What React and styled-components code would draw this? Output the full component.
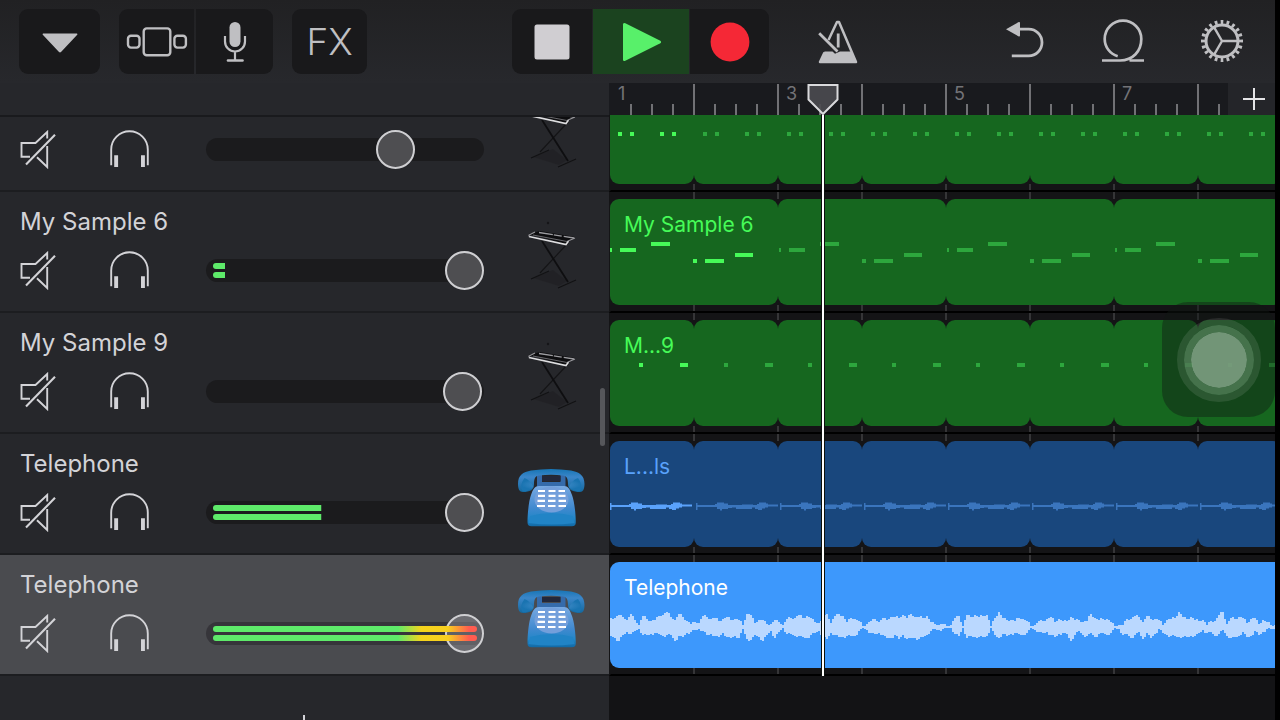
import React, { useState } from "react";
import styled, { createGlobalStyle, css } from "styled-components";

const GlobalStyle = createGlobalStyle`
  * {
    box-sizing: border-box;
  }
  body {
    margin: 0;
    background: #000;
    font-family: Inter, "Liberation Sans", sans-serif;
  }
  button {
    margin: 0;
    padding: 0;
    border: 0;
    background: none;
    color: inherit;
    font: inherit;
    cursor: pointer;
  }
  svg {
    display: block;
  }
`;

/* one bar of the song, in pixels */
const BAR = 84;

const Page = styled.div`
  position: relative;
  display: flex;
  flex-direction: column;
  height: 100vh;
  overflow: hidden;
  border-right: 5px solid #000;
  background: linear-gradient(#212123, #27282c 83px);
`;

/* ---------- toolbar ---------- */

const Toolbar = styled.header`
  flex: none;
  display: grid;
  grid-template-columns: 1fr auto 1fr;
  align-items: center;
  height: 83px;
  padding: 0 13px 0 19px;
  color: #bfbfc2;
`;

const ToolGroups = styled.div`
  display: flex;
  gap: 19px;
`;

const ButtonGroup = styled.div`
  display: flex;
  gap: ${({ gap }) => gap || "0"};
  border-radius: 9px;
  overflow: hidden;
`;

const ToolButton = styled.button`
  display: flex;
  justify-content: center;
  align-items: center;
  width: ${({ width }) => width};
  height: 65px;
  background: ${({ on }) => (on ? "#1b431f" : "#19191b")};
`;

const FxButton = styled(ToolButton)`
  font-size: 37px;
  font-weight: 300;
`;

const PlainButton = styled(ToolButton)`
  background: none;
`;

const RightTools = styled.div`
  display: flex;
  justify-content: space-between;
  padding-left: 28px;
`;

/* ---------- workspace ---------- */

const Workspace = styled.main`
  flex: 1;
  display: grid;
  grid-template-columns: 609px 1fr;
  min-height: 0;
`;

const TrackPanel = styled.section`
  position: relative;
  display: flex;
  flex-direction: column;
  min-height: 0;
  background: #26272b;
`;

const PanelHeader = styled.div`
  flex: none;
  height: 34px;
  border-bottom: 2px solid #191a1d;
`;

const Viewport = styled.div`
  flex: 1;
  min-height: 0;
  overflow: hidden;
`;

/* the list is scrolled a little way down */
const TrackList = styled.ul`
  margin: -46px 0 0;
  padding: 0;
  list-style: none;
`;

const TrackRow = styled.li`
  display: grid;
  grid-template-columns: 1fr 68px;
  gap: 33px;
  height: 121px;
  padding: 0 24px 0 20px;
  border-bottom: 2px solid #1c1d20;
  background: ${({ selected }) => (selected ? "#4a4b4f" : "#26272b")};
  color: #d3d3d7;
`;

const TrackMain = styled.div`
  display: flex;
  flex-direction: column;
  gap: 14px;
  padding-top: 15px;
`;

const TrackName = styled.div`
  height: 30px;
  font-size: 24px;
  line-height: 30px;
  white-space: nowrap;
`;

const Controls = styled.div`
  display: flex;
  justify-content: space-between;
`;

const IconButton = styled.button`
  width: ${({ width }) => width};
  height: 39px;
`;

const Instrument = styled.div`
  padding-top: 28px;
`;

const Volume = styled.label`
  display: grid;
  align-items: center;
  width: 278px;
  height: 39px;

  > * {
    grid-area: 1 / 1;
  }
`;

const Groove = styled.span`
  display: flex;
  flex-direction: column;
  justify-content: center;
  gap: 3px;
  height: 23px;
  padding: 0 7px;
  border-radius: 12px;
  background: ${({ selected }) => (selected ? "#36353a" : "#1b1b1d")};
`;

const MeterBar = styled.span`
  height: 6px;
  border-radius: 3px;
  background: linear-gradient(
    to right,
    #5eea6a 70%,
    #f5d31c 79%,
    #f8cf20 89%,
    #ff5c50 97%
  );
`;

const thumbColor = css`
  ${({ selected }) =>
    selected ? "rgba(150, 148, 156, 0.45)" : "rgba(80, 80, 83, 0.96)"}
`;

const Range = styled.input`
  appearance: none;
  width: 100%;
  height: 39px;
  margin: 0;
  background: none;

  &::-webkit-slider-thumb {
    appearance: none;
    width: 39px;
    height: 39px;
    border: 2px solid #cfcfd2;
    border-radius: 50%;
    background: ${thumbColor};
  }
`;

const AddTrack = styled.button`
  display: flex;
  justify-content: center;
  align-items: center;
  width: 100%;
  height: 119px;
  padding-right: 2px;
  color: #d3d3d7;
`;

const ScrollThumb = styled.div`
  position: absolute;
  top: 305px;
  right: 4px;
  width: 5px;
  height: 58px;
  border-radius: 3px;
  background: #56575b;
`;

/* ---------- timeline ---------- */

const Timeline = styled.section`
  min-width: 0;
  overflow: hidden;
  background: #131315;
`;

const Song = styled.div`
  position: relative;
`;

const RulerRow = styled.div`
  display: flex;
  height: 32px;
  background: #191a1e;
`;

const Ruler = styled.div`
  flex: 1;
  display: flex;
  min-width: 0;
  overflow: hidden;
`;

const RulerBar = styled.div`
  flex: none;
  width: ${BAR}px;
  height: 31px;
  margin-top: 1px;
  padding-left: 7px;
  border-left: 2px solid ${({ first }) => (first ? "transparent" : "#717175")};
  background: repeating-linear-gradient(
      to right,
      transparent 0 19px,
      #717175 19px 21px
    )
    bottom / 100% 11px no-repeat;
  color: #737377;
  font-size: 18px;
  line-height: 20px;
`;

const AddSection = styled.button`
  flex: none;
  display: flex;
  justify-content: center;
  align-items: center;
  width: 47px;
  padding-left: 5px;
  background: #242529;
  color: #e4e4e6;
`;

const LaneViewport = styled.div`
  overflow: hidden;
`;

const Lanes = styled.div`
  margin-top: -44px;
  background: #141416;
`;

const Lane = styled.div`
  height: 121px;
  padding: 7px 0 6px;
  border-left: 2px solid #141416;
  border-bottom: 2px solid #000;
  background: repeating-linear-gradient(
      to right,
      #353537 0 2px,
      transparent 2px ${BAR}px
    )
    border-box;
`;

const Region = styled.div`
  display: flex;
  height: 106px;
  margin-left: -1px;
  background: #141416;
`;

const regionColors = {
  midi: { fill: "#16671f", bright: "#46fb58", dim: "#2da73d" },
  dark: { fill: "#19477d", bright: "#5aa2fb", dim: "#3a75bd" },
  audio: { fill: "#3d98fc", bright: "#bad8ff", dim: "#bad8ff" },
};

const Loop = styled.div`
  flex: none;
  display: grid;
  width: ${({ bars }) => bars * BAR}px;
  height: 106px;
  border-radius: 9px;
  background: ${({ kind }) => regionColors[kind].fill};
  color: ${({ kind }) => regionColors[kind].bright};
  overflow: hidden;

  > * {
    grid-area: 1 / 1;
  }
`;

const RegionName = styled.span`
  padding: 13px 0 0 14px;
  color: ${({ kind }) => (kind === "audio" ? "#fff" : "inherit")};
  font-size: 21px;
  line-height: 26px;
  white-space: nowrap;
`;

const Playhead = styled.div`
  position: absolute;
  top: 0;
  bottom: 0;
  left: 198px;
  display: flex;
  flex-direction: column;
  align-items: center;
  width: 32px;
`;

const PlayheadLine = styled.div`
  flex: 1;
  width: 4px;
  border: solid #0b0f0c;
  border-width: 0 1px;
  background: #fff;
`;

const TouchButton = styled.button`
  position: absolute;
  top: 302px;
  right: 0;
  display: flex;
  justify-content: center;
  align-items: center;
  width: 113px;
  height: 115px;
  border-radius: 26px;
  background: rgba(16, 24, 18, 0.42);
`;

const TouchRing = styled.span`
  display: flex;
  justify-content: center;
  align-items: center;
  width: 84px;
  height: 84px;
  border: 7px solid rgba(255, 255, 255, 0.1);
  border-radius: 50%;
`;

const TouchDisc = styled.span`
  width: 70px;
  height: 70px;
  border: 7px solid rgba(96, 138, 102, 0.66);
  border-radius: 50%;
  background: rgba(128, 160, 132, 0.88);
  background-clip: padding-box;
`;

/* ---------- icons ---------- */

const TriangleIcon = () => (
  <svg width="36" height="22" viewBox="0 0 36 22">
    <path d="M1 2.500h34q1 .6 0 1.600L19 21q-1 .8-2 0L1 4.100q-1-1 0-1.600z" fill="currentColor" />
  </svg>
);

const BrowserIcon = () => (
  <svg width="62" height="32" viewBox="0 0 62 32" fill="none" stroke="currentColor" strokeWidth="2.4">
    <rect x="2" y="9.8" width="11.5" height="11.8" rx="3" />
    <rect x="17.7" y="2.4" width="26.6" height="26.9" rx="3" />
    <rect x="48.4" y="9.8" width="11.5" height="11.8" rx="3" />
  </svg>
);

const MicIcon = () => (
  <svg width="24" height="42" viewBox="0 0 24 42" fill="none" stroke="currentColor" strokeWidth="2.2">
    <rect x="6.5" y="1" width="11" height="25" rx="5.5" fill="currentColor" stroke="none" />
    <path d="M2 15v5.500a10 10 0 0 0 20 0V15M12 30.500v9" />
    <path d="M5 39.500h14.500" strokeWidth="2.6" strokeLinecap="round" />
  </svg>
);

const StopIcon = () => (
  <svg width="36" height="36" viewBox="0 0 36 36">
    <rect x=".5" y=".5" width="35" height="35" rx="2.5" fill="#d0ced2" />
  </svg>
);

const PlayIcon = () => (
  <svg width="40" height="40" viewBox="0 0 40 40">
    <path d="M2 2.500q0-2.300 2.300-1.300l35 17.500q1.600 1.300 0 2.600l-35 17.500Q2 39.800 2 37.500z" fill="#58f06a" />
  </svg>
);

const RecordIcon = () => (
  <svg width="40" height="40" viewBox="0 0 40 40">
    <circle cx="20" cy="20" r="19.4" fill="#f52836" />
  </svg>
);

const MetronomeIcon = () => (
  <svg width="42" height="46" viewBox="0 0 42 46" fill="none" stroke="currentColor" strokeWidth="2.5">
    <path d="M12.500 21 21 3h2l17 40H4l4.500-9.500" strokeLinejoin="round" />
    <path d="M8.500 32.500h8l2.500 2.200 5-2.200h12L40.500 44h-37z" fill="currentColor" stroke="none" />
    <path d="M22.200 14.500v14M3.200 14.200 21.500 32.500" strokeWidth="2.8" />
  </svg>
);

const UndoIcon = () => (
  <svg width="42" height="42" viewBox="0 0 42 42">
    <path d="M3 8.200 15.800 1q1.200-.4 1.200 1v12.500q0 1.300-1.200 1z" fill="currentColor" />
    <path d="M16 8.200h9.700a13.300 13.300 0 0 1 0 26.600H8.800" fill="none" stroke="currentColor" strokeWidth="2.8" />
  </svg>
);

const LoopIcon = () => (
  <svg width="46" height="46" viewBox="0 0 46 46" fill="none" stroke="currentColor" strokeWidth="2.7">
    <path d="M2 41.500h18C33 41.500 41.300 32 41.300 20A18.300 18.300 0 1 0 4.700 20c0 8 5.300 15 13 17.300M29.500 41.500H44" />
  </svg>
);

const GearIcon = () => (
  <svg width="44" height="44" viewBox="0 0 44 44" fill="none" stroke="currentColor">
    <circle cx="22" cy="21" r="16" strokeWidth="3" />
    <circle cx="22" cy="21" r="19" strokeWidth="4" pathLength="40" strokeDasharray=".9 1.1" strokeDashoffset=".45" />
    <path d="M22 21h16M22 21l-8-13.900M22 21l-8 13.900" strokeWidth="2.4" />
  </svg>
);

const MuteIcon = () => (
  <svg width="36" height="39" viewBox="0 0 36 39" fill="none" stroke="currentColor" strokeWidth="1.9">
    <path d="M27.200 8.500V2L15.500 13h-14v13.700H10M17 27.200l10.200 9.800V16" />
    <path d="M6 34.500 35 4.800" strokeWidth="2.1" />
  </svg>
);

const HeadphonesIcon = () => (
  <svg width="42" height="39" viewBox="0 0 42 39">
    <path d="M1.200 35.200V19.500a18.300 18.300 0 0 1 36.600 0v15.700" fill="none" stroke="currentColor" strokeWidth="1.9" />
    <path d="M4.200 25.300h3.900V37H4.200zM31 25.300h3.900V37H31z" fill="currentColor" />
  </svg>
);

const PlusIcon = ({ size }) => (
  <svg width={size} height={size} viewBox={`0 0 ${size} ${size}`} stroke="currentColor" strokeWidth="2">
    <path d={`M0 ${size / 2}H${size}M${size / 2} 0V${size}`} />
  </svg>
);

const PlayheadIcon = () => (
  <svg width="32" height="32" viewBox="0 0 32 32">
    <path d="M1.500 2h29v14.500L16 31 1.500 16.500z" fill="#4b4b50" fillOpacity=".9" stroke="#d9d9dc" strokeWidth="2" />
  </svg>
);

const KeyboardIcon = () => (
  <svg width="68" height="70" viewBox="0 0 68 70" fill="none">
    <path d="m16 58 20-8 14 11-8 5z" fill="#202124" fillOpacity=".8" />
    <path d="M51 23 23 53" stroke="#141416" strokeWidth="1.1" />
    <path d="m25 21 26 41" stroke="#0e0e10" strokeWidth="1.8" />
    <path d="m14 59 18-8M41 68l18-8" stroke="#121214" strokeWidth="1.3" />
    <path d="m12 14 11-3 35 6-5 3-4 4z" fill="#0d0d0f" />
    <path d="M12 16.500 49 24.500l2.500-3.500" stroke="#dedee0" strokeWidth="1.6" />
    <path d="M12 16.500V15l6-3M51 21l7-3" stroke="#98989c" strokeWidth="1.1" />
    <path d="m22 12.500 35 5.500" stroke="#9c9ca0" strokeWidth="1.4" strokeDasharray="14 1 8 2" />
    <path d="m16 15 34 6.500" stroke="#68686c" strokeWidth="1" />
    <circle cx="31" cy="3" r="1.2" fill="#151518" />
  </svg>
);

const PhoneIcon = () => (
  <svg width="68" height="70" viewBox="0 0 68 70">
    <defs>
      <linearGradient id="phoneBody" x1="0" y1="0" x2="0" y2="1">
        <stop offset="0" stopColor="#78a9e2" />
        <stop offset=".55" stopColor="#4089cf" />
        <stop offset=".8" stopColor="#2387c8" />
        <stop offset="1" stopColor="#1169a5" />
      </linearGradient>
      <linearGradient id="phoneHandset" x1="0" y1="0" x2="0" y2="1">
        <stop offset="0" stopColor="#1775b5" />
        <stop offset=".35" stopColor="#3b86c9" />
        <stop offset="1" stopColor="#14699f" />
      </linearGradient>
      <radialGradient id="phoneEar">
        <stop offset="0" stopColor="#5a9cd8" />
        <stop offset="1" stopColor="#1a74b1" />
      </radialGradient>
    </defs>
    <path d="M20 13h5v7h18.500v-7h5v14H20z" fill="#356bab" />
    <path d="M25 14h18.500v5H25z" fill="#23283b" />
    <path d="M22 24h25c4 0 6 3 8 9 2 5 3.800 18 3.800 27 0 3-1 4.300-4 4.300H14.500c-3 0-4-1.300-4-4.300 0-9 1.500-22 3.500-27 2-6 4-9 8-9z" fill="url(#phoneBody)" />
    <ellipse cx="34.500" cy="37.500" rx="17" ry="13" fill="#739fdb" />
    <path d="M13 54q21.500-6 43 0l1.500 7q-23 3-46 0z" fill="#2184c6" />
    <path d="M1 22C1 13 6 10 14 8.500q20-3 40 0C62 10 67.500 13 67.500 22c0 5-1.500 8-4.500 8-7 0-12-2-12-8 0-5-1-8-5-8.500q-12-1.500-24 0c-4 .5-5 3.500-5 8.500 0 6-4 8-11 8-3.500 0-5-3-5-8z" fill="url(#phoneHandset)" />
    <path d="M7.500 16q5.500 2 9 9-5 5-11 4Q2 23 7.500 16zM61 16q-6 2-9 9 5 5 11 4 3.500-6-2-13z" fill="url(#phoneEar)" />
    <path d="M21 29h7M31.500 29h7M41.500 29H48M21 33.800h7M31.500 33.800h7M41.500 33.800h7M20.500 38.800H28M31 38.800h7.500M41.500 38.800h7.500M20 44h8M31 44h7.500M41.500 44h7.500" stroke="#fff" strokeWidth="2.2" />
  </svg>
);

/* ---------- region contents ---------- */

// [x, y, width] of every note within one loop
const dotNotes = [[8, 54, 4], [20, 54, 4], [50, 54, 4], [62, 54, 4]];
const sampleSixNotes = [[0, 49, 2], [10, 49, 16], [41, 43, 19], [83, 60, 4], [95, 60, 19], [125, 54, 18]];
const sampleNineNotes = [[29, 43, 4], [70, 43, 8]];

function Notes({ notes, shift, color, width }) {
  return (
    <svg width={width} height="106" fill={color}>
      {notes.map(([x, y, w]) => (
        <rect key={x} x={x + shift} y={y} width={w} height="4" />
      ))}
    </svg>
  );
}

function QuietWave({ shift, color }) {
  return (
    <svg width={BAR} height="106" fill={color}>
      <path
        transform={`translate(${shift} 65)`}
        d="M0-3h1.500v2H19v-1h2v-1.500h7v1h4v1.500h14v-.4h11v.4h4v-1h2v-1.500h7v1h2v1h10v2H72v1h-3v1h-3v1.500h-1V4h-3V3h-3V1.600h-3V3H40V1.600h-4V2h-4v1h-6v1.500h-2V3h-3V1H1.500v3H0z"
      />
    </svg>
  );
}

// half heights above and below the centre line, one pair per four pixels
const waveUp = [
  9, 9, 12, 10, 7, 13, 7, 2, 11, 8, 6, 7, 11, 12, 15, 10, 7, 13, 10, 6, 3, 5, 4, 11, 10, 8, 9, 6, 8, 10, 7, 8, 7, 2,
  13, 12, 4, 7, 7, 3, 3, 7, 5, 2, 8, 9, 9, 12, 9, 11, 9, 5, 4, 8, 13, 4, 11, 13, 11, 5, 9, 8, 6, 1, 3, 6, 8, 5, 9,
  7, 10, 10, 9, 12, 9, 13, 10, 10, 9, 11, 5, 3, 2, 3, 1, 2, 9, 11, 1, 12, 10, 12, 10, 11, 12, 1, 9, 15, 9, 7, 7, 6, 9,
  8, 6, 1, 2, 6, 6, 8, 10, 5, 8, 6, 6, 10, 7, 7, 5, 6, 13, 9, 7, 8, 8, 5, 1, 2, 2, 8, 8, 11, 10, 5, 11, 8, 8, 7, 2, 7,
  8, 9, 15, 10, 8, 10, 7, 6, 7, 2, 6, 6, 12, 15, 3, 9, 8, 10, 9, 4, 8, 9, 3, 7, 5, 2, 2,
];
const waveDown = [
  9, 11, 14, 8, 5, 7, 4, 2, 8, 8, 7, 6, 7, 9, 8, 8, 14, 9, 10, 6, 5, 3, 2, 4, 8, 7, 9, 10, 6, 10, 11, 9, 11, 2, 12, 13,
  8, 10, 14, 8, 4, 11, 5, 1, 7, 7, 9, 9, 10, 11, 8, 6, 4, 9, 12, 6, 8, 10, 10, 9, 9, 9, 4, 1, 3, 6, 7, 6, 8, 11, 11,
  8, 12, 8, 12, 11, 11, 12, 10, 8, 4, 2, 3, 2, 1, 1, 7, 9, 1, 11, 9, 10, 10, 10, 9, 1, 8, 11, 7, 9, 7, 6, 7, 8, 6, 1, 3,
  5, 6, 5, 8, 10, 7, 6, 7, 14, 8, 4, 8, 9, 6, 10, 7, 6, 8, 6, 1, 2, 8, 7, 11, 8, 5, 12, 6, 11, 7, 2, 6, 8, 9, 9, 10, 10,
  10, 9, 9, 6, 3, 6, 5, 9, 7, 3, 9, 11, 10, 9, 5, 10, 9, 4, 8, 5, 2, 2, 2, 2,
];

function wavePath() {
  let d = "";
  waveUp.forEach((up, i) => {
    const down = waveDown[i] || 2;
    const nextUp = waveUp[i + 1] || 2;
    const nextDown = waveDown[i + 1] || 2;
    // the second half of each step leans towards the next one
    const midUp = Math.round((up + nextUp) / 2 + (i % 3) - 1) || 1;
    const midDown = Math.round((down + nextDown) / 2 + ((i + 1) % 3) - 1) || 1;
    d += `M${i * 4} ${-up}h2v${up + down}h-2z`;
    d += `M${i * 4 + 2} ${-midUp}h2v${midUp + midDown}h-2z`;
  });
  return d;
}

function LoudWave({ color, width }) {
  return (
    <svg width={width} height="106" fill={color}>
      <path transform="translate(0 65)" d={wavePath()} />
    </svg>
  );
}

const tracks = [
  { id: 1, name: "", volume: 71, level: 0, icon: "keyboard" },
  { id: 2, name: "My Sample 6", volume: 100, level: 4.5, icon: "keyboard" },
  { id: 3, name: "My Sample 9", volume: 99, level: 0, icon: "keyboard" },
  { id: 4, name: "Telephone", volume: 100, level: 41, icon: "phone" },
  { id: 5, name: "Telephone", volume: 100, level: 100, icon: "phone" },
];

const regions = [
  { id: 1, kind: "midi", bars: 1, label: "", notes: dotNotes },
  { id: 2, kind: "midi", bars: 2, label: "My Sample 6", notes: sampleSixNotes },
  { id: 3, kind: "midi", bars: 1, label: "M...9", notes: sampleNineNotes },
  { id: 4, kind: "dark", bars: 1, label: "L...ls" },
  { id: 5, kind: "audio", bars: 24, label: "Telephone" },
];

const SONG_BARS = 24;

function Track({ track, selected, onSelect }) {
  const [volume, setVolume] = useState(track.volume);
  const clip = { clipPath: `inset(0 ${100 - track.level}% 0 0)` };

  return (
    <TrackRow selected={selected} onClick={onSelect}>
      <TrackMain>
        <TrackName>{track.name}</TrackName>
        <Controls>
          <IconButton width="36px" aria-label="Mute">
            <MuteIcon />
          </IconButton>
          <IconButton width="42px" aria-label="Solo">
            <HeadphonesIcon />
          </IconButton>
          <Volume>
            <Groove selected={selected}>
              {track.level > 0 && (
                <>
                  <MeterBar style={clip} />
                  <MeterBar style={clip} />
                </>
              )}
            </Groove>
            <Range
              type="range"
              min="0"
              max="100"
              aria-label="Volume"
              selected={selected}
              value={volume}
              onChange={(e) => setVolume(e.target.value)}
            />
          </Volume>
        </Controls>
      </TrackMain>
      <Instrument>
        {track.icon === "phone" ? <PhoneIcon /> : <KeyboardIcon />}
      </Instrument>
    </TrackRow>
  );
}

function RegionLane({ region }) {
  const { kind, bars, label, notes } = region;
  const loops = Array.from({ length: SONG_BARS / bars }, (_, i) => i);

  return (
    <Lane>
      <Region>
        {loops.map((i) => {
          const color = i === 0 ? regionColors[kind].bright : regionColors[kind].dim;
          return (
            <Loop key={i} kind={kind} bars={bars}>
              {kind === "midi" && (
                <Notes notes={notes} shift={i === 0 ? 0 : 1} color={color} width={bars * BAR} />
              )}
              {kind === "dark" && <QuietWave shift={i === 0 ? 0 : 2} color={color} />}
              {kind === "audio" && <LoudWave color={color} width={bars * BAR} />}
              {i === 0 && label && <RegionName kind={kind}>{label}</RegionName>}
            </Loop>
          );
        })}
      </Region>
    </Lane>
  );
}

function App() {
  const [selected, setSelected] = useState(5);
  const [playing, setPlaying] = useState(true);

  return (
    <>
      <GlobalStyle />
      <Page>
        <Toolbar>
          <ToolGroups>
            <ButtonGroup>
              <ToolButton width="81px" aria-label="Songs">
                <TriangleIcon />
              </ToolButton>
            </ButtonGroup>
            <ButtonGroup gap="2px">
              <ToolButton width="75px" aria-label="Sound browser">
                <BrowserIcon />
              </ToolButton>
              <ToolButton width="77px" aria-label="Instrument">
                <MicIcon />
              </ToolButton>
            </ButtonGroup>
            <ButtonGroup>
              <FxButton width="75px">FX</FxButton>
            </ButtonGroup>
          </ToolGroups>
          <ButtonGroup gap="1px">
            <ToolButton width="80px" aria-label="Stop" onClick={() => setPlaying(false)}>
              <StopIcon />
            </ToolButton>
            <ToolButton width="96px" aria-label="Play" on={playing} onClick={() => setPlaying(true)}>
              <PlayIcon />
            </ToolButton>
            <ToolButton width="79px" aria-label="Record">
              <RecordIcon />
            </ToolButton>
          </ButtonGroup>
          <RightTools>
            <PlainButton width="80px" aria-label="Metronome">
              <MetronomeIcon />
            </PlainButton>
            <ToolGroups>
              <PlainButton width="80px" aria-label="Undo">
                <UndoIcon />
              </PlainButton>
              <PlainButton width="80px" aria-label="Loops">
                <LoopIcon />
              </PlainButton>
              <PlainButton width="80px" aria-label="Settings">
                <GearIcon />
              </PlainButton>
            </ToolGroups>
          </RightTools>
        </Toolbar>
        <Workspace>
          <TrackPanel>
            <PanelHeader />
            <Viewport>
              <TrackList>
                {tracks.map((track) => (
                  <Track
                    key={track.id}
                    track={track}
                    selected={track.id === selected}
                    onSelect={() => setSelected(track.id)}
                  />
                ))}
              </TrackList>
              <AddTrack aria-label="Add track">
                <PlusIcon size={42} />
              </AddTrack>
            </Viewport>
            <ScrollThumb />
          </TrackPanel>
          <Timeline>
            <Song>
              <RulerRow>
                <Ruler>
                  {Array.from({ length: SONG_BARS }, (_, i) => (
                    <RulerBar key={i} first={i === 0}>
                      {i % 2 === 0 && i < 8 ? i + 1 : null}
                    </RulerBar>
                  ))}
                </Ruler>
                <AddSection aria-label="Add section">
                  <PlusIcon size={22} />
                </AddSection>
              </RulerRow>
              <LaneViewport>
                <Lanes>
                  {regions.map((region) => (
                    <RegionLane key={region.id} region={region} />
                  ))}
                </Lanes>
              </LaneViewport>
              <Playhead>
                <PlayheadIcon />
                <PlayheadLine />
              </Playhead>
            </Song>
          </Timeline>
        </Workspace>
        <TouchButton aria-label="Assistive touch">
          <TouchRing>
            <TouchDisc />
          </TouchRing>
        </TouchButton>
      </Page>
    </>
  );
}

export default App;
